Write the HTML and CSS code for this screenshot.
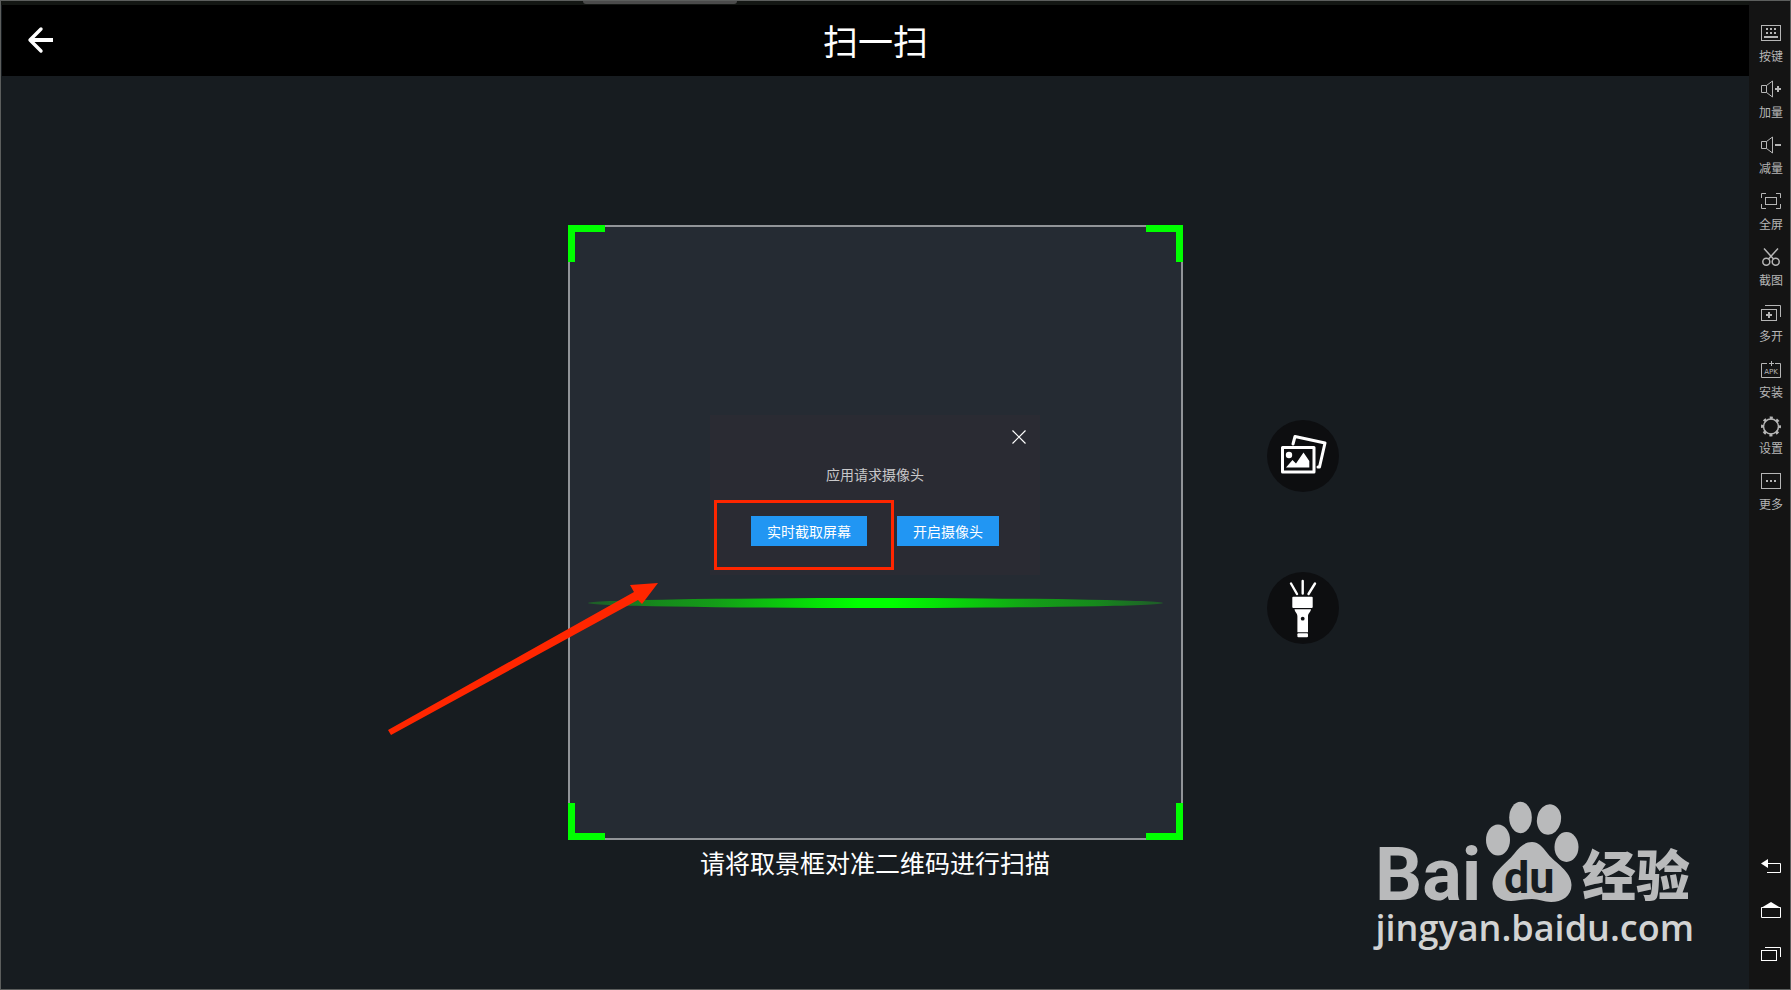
FILE: index.html
```html
<!DOCTYPE html>
<html lang="zh-CN">

<head>
  <meta charset="UTF-8">
  <meta name="viewport" content="width=device-width, initial-scale=1.0">

  <title>扫一扫</title>
  <link rel="stylesheet" href="styles.css">
</head>

<body>

  <div class="window">
    <main class="screen">
      <div class="strip">
        <div class="strip-tab"></div>
      </div>

      <header class="header">
        <button type="button" class="back" aria-label="返回">
          <svg width="28" height="28" viewBox="0 0 28 28" fill="none" stroke="#fff" stroke-width="4">
            <path d="M4 14H27" />
            <path d="M15 3L4 14L15 25" stroke-linecap="round" stroke-linejoin="round" stroke-width="3.4" />
          </svg>
        </button>
        <h1>扫一扫</h1>
      </header>

      <section class="stage">
        <div class="frame">
          <span class="corner top-left"></span>
          <span class="corner top-right"></span>
          <span class="corner bottom-left"></span>
          <span class="corner bottom-right"></span>
          <div class="scan-line"></div>
        </div>

        <div class="actions">
          <button type="button" class="round" aria-label="相册">
            <svg width="72" height="72" viewBox="0 0 72 72" fill="none" stroke="#fff" stroke-width="3"
              stroke-linejoin="round" stroke-linecap="round">
              <path d="M26 24L28 16.500L58 23L52.500 47H51" />
              <rect x="15.500" y="27.500" width="31.500" height="24.500" />
              <circle cx="22" cy="35" r="3.200" fill="#fff" stroke="none" />
              <path d="M19 47.500L25.500 40L29 43.500L36.500 32.500L42.300 41V47.500Z" fill="#fff" stroke="none" />
            </svg>
          </button>
          <button type="button" class="round" aria-label="手电筒">
            <svg width="72" height="72" viewBox="0 0 72 72" fill="#fff">
              <path d="M35.700 9V21.500M24 11.500L30 22M48 11.500L41.500 22" stroke="#fff" stroke-width="2.400"
                stroke-linecap="round" />
              <rect x="25.300" y="24.700" width="20.400" height="11.300" rx="1" />
              <path d="M27.500 37.300H44C43.600 40.500 41 41 41 44.500V60.300H30.400V44.500C30.400 41 27.900 40.500 27.500 37.300Z" />
              <rect x="30.400" y="61.300" width="10.600" height="4" rx="1" />
              <circle cx="35.700" cy="46.700" r="1.900" fill="#0d0e10" />
            </svg>
          </button>
        </div>

        <p class="hint">请将取景框对准二维码进行扫描</p>
      </section>

      <div class="overlay">
        <div class="dialog" role="dialog" aria-labelledby="dialog-text">
          <button type="button" class="close" aria-label="关闭">
            <svg width="14" height="14" viewBox="0 0 14 14" stroke="#fff" stroke-width="1.200">
              <path d="M0.500 0.500L13.500 13.500M13.500 0.500L0.500 13.500" />
            </svg>
          </button>
          <p id="dialog-text">应用请求摄像头</p>
          <div class="dialog-buttons">
            <button type="button" class="but">实时截取屏幕</button>
            <button type="button" class="but">开启摄像头</button>
          </div>
          <div class="mark-box"></div>
          <svg class="mark-arrow" width="272" height="154" viewBox="0 0 272 154" fill="#ff2600">
            <path d="M0 148L246 10L242 3L270 1L254 22L250 18L3 153Z" />
          </svg>
        </div>
      </div>

      <div class="watermark">
        <svg width="320" height="102" viewBox="0 0 320 102" fill="#b9babb">
          <text class="logo-bai" x="1" y="99">Bai</text>
          <ellipse cx="124" cy="39" rx="12" ry="15.500" />
          <ellipse cx="146.500" cy="16.500" rx="11.300" ry="15.700" />
          <ellipse cx="175" cy="18.500" rx="12" ry="15.300" transform="rotate(10 175 18.500)" />
          <ellipse cx="192.500" cy="46" rx="12" ry="15" />
          <path d="M158 41C164 41 168 45 174 53C181 62 197.500 70 197.500 84C197.500 95 188 101 177 101C170 101 165 98 158 98C149 98 144 100 137 100C126 100 118.500 94 118.500 83C118.500 70 132 63 140 53C146 45 151 41 158 41Z" />
          <text class="logo-du" x="130" y="92">du</text>
          <text class="logo-cn" x="208" y="95">经验</text>
        </svg>
        <p>jingyan.baidu.com</p>
      </div>
    </main>

    <aside class="toolbar">
      <nav class="tools">
        <button type="button" class="tool">
          <svg viewBox="0 0 20 20">
            <rect x="0.500" y="2.500" width="19" height="15" />
            <path d="M5 6H15M5 10H15" stroke-width="2" stroke-dasharray="2 2" />
            <path d="M3 14H17" stroke-width="2" />
          </svg>
          <span>按键</span>
        </button>
        <button type="button" class="tool">
          <svg viewBox="0 0 20 20">
            <path d="M5.500 6.500H0.500V13.500H5.500ZM5.500 6.500L11.500 2V18L5.500 13.500" />
            <path d="M14 10H20M17 7V13" stroke-width="2" />
          </svg>
          <span>加量</span>
        </button>
        <button type="button" class="tool">
          <svg viewBox="0 0 20 20">
            <path d="M5.500 6.500H0.500V13.500H5.500ZM5.500 6.500L11.500 2V18L5.500 13.500" />
            <path d="M14 10H20" stroke-width="2" />
          </svg>
          <span>减量</span>
        </button>
        <button type="button" class="tool">
          <svg viewBox="0 0 20 20">
            <path d="M0.500 7V2.500H5M15 2.500H19.500V7M19.500 13V17.500H15M5 17.500H0.500V13" />
            <rect x="4.500" y="6.500" width="11" height="7" />
          </svg>
          <span>全屏</span>
        </button>
        <button type="button" class="tool">
          <svg viewBox="0 0 20 20" stroke-width="1.500">
            <path d="M3 1.500L12.500 12M17 1.500L7.500 12" />
            <circle cx="5.300" cy="14.700" r="3.500" />
            <circle cx="14.700" cy="14.700" r="3.500" />
          </svg>
          <span>截图</span>
        </button>
        <button type="button" class="tool">
          <svg viewBox="0 0 20 20">
            <rect x="0.500" y="6.500" width="15" height="11" />
            <path d="M4 2.500H19.500V14" />
            <path d="M5 12H11M8 9V15" stroke-width="2" />
          </svg>
          <span>多开</span>
        </button>
        <button type="button" class="tool">
          <svg viewBox="0 0 20 20">
            <path d="M6 4.500H0.500V18.500H19.500V4.500H14" />
            <path d="M10.500 2V7M8 4.500H13" />
            <text class="apk" x="10" y="15">APK</text>
          </svg>
          <span>安装</span>
        </button>
        <button type="button" class="tool">
          <svg class="gear" viewBox="0 0 20 20">
            <circle cx="10" cy="11.500" r="7.500" stroke-width="1.500" />
            <circle cx="10" cy="11.500" r="8.500" stroke-width="3" stroke-dasharray="3 3.676" stroke-dashoffset="1.500" />
          </svg>
          <span>设置</span>
        </button>
        <button type="button" class="tool">
          <svg viewBox="0 0 20 20">
            <rect x="0.500" y="2.500" width="19" height="15" />
            <path d="M5 10H15" stroke-width="2" stroke-dasharray="2 2" />
          </svg>
          <span>更多</span>
        </button>
      </nav>

      <nav class="keys">
        <button type="button" class="key" aria-label="返回键">
          <svg viewBox="0 0 20 20">
            <path d="M7 7.500H19.500V16.500H6" />
            <path d="M0 7.500L7 3V12Z" fill="#fff" stroke="none" />
          </svg>
        </button>
        <button type="button" class="key" aria-label="主页">
          <svg viewBox="0 0 20 20">
            <path d="M0.500 7.500H19.500V17.500H0.500Z" />
            <path d="M10 2L20 8H0Z" fill="#fff" stroke="none" />
          </svg>
        </button>
        <button type="button" class="key" aria-label="最近任务">
          <svg viewBox="0 0 20 20">
            <rect x="0.500" y="6.500" width="15" height="10" />
            <path d="M4 3.500H19.500V13" />
          </svg>
        </button>
      </nav>
    </aside>
  </div>

</body>

</html>
```

FILE: styles.css
```css
* {
  margin: 0;
  padding: 0;
  box-sizing: border-box;
}

body {
  font-family: "Noto Sans CJK SC", sans-serif;
  color: #fff;
  background-color: #161b1f;
}

button {
  border: none;
  background: none;
  color: inherit;
  font-family: inherit;
  cursor: pointer;
}

svg {
  display: block;
}

.window {
  display: flex;
  min-height: 100vh;
  border: 1px solid #5c5e5d;
}

.screen {
  position: relative;
  flex: 1;
  display: flex;
  flex-direction: column;
}

/* top bar */
.strip {
  height: 4px;
  background-color: #131613;
}

.strip-tab {
  width: 154px;
  height: 3px;
  margin-left: 33.3%;
  background-color: #4b4b4b;
  border-radius: 0 0 3px 3px;
}

.header {
  display: grid;
  grid-template-columns: 1fr auto 1fr;
  align-items: center;
  height: 71px;
  padding: 0 24px 2px;
  margin-left: 1px;
  background-color: #000;
}

.back {
  justify-self: start;
}

.header h1 {
  font-size: 35px;
  line-height: 48px;
  font-weight: 400;
}

/* scanner */
.stage {
  flex: 1;
  display: grid;
  grid-template-columns: 1fr auto 1fr;
  grid-template-rows: 1fr auto 1fr;
  background-color: #171c20;
}

.frame {
  grid-area: 2 / 2;
  position: relative;
  width: 615px;
  aspect-ratio: 1;
  border: 2px solid #919498;
  background-color: #252b33;
}

.corner {
  position: absolute;
  width: 37px;
  height: 37px;
  border: 0 solid #00ff00;
}

.top-left {
  top: -2px;
  left: -2px;
  border-width: 7px 0 0 7px;
}

.top-right {
  top: -2px;
  right: -2px;
  border-width: 7px 7px 0 0;
}

.bottom-left {
  bottom: -2px;
  left: -2px;
  border-width: 0 0 7px 7px;
}

.bottom-right {
  right: -2px;
  bottom: -2px;
  border-width: 0 7px 7px 0;
}

.scan-line {
  position: absolute;
  top: 371px;
  left: 18px;
  right: 18px;
  height: 10px;
  border-radius: 50%;
  background-image: linear-gradient(to right, #1f5a29, #168a1c 12%, #149c18 22%, #00ff00 47%, #00ff00 53%, #149c18 78%, #168a1c 88%, #1f5a29);
}

.actions {
  grid-area: 2 / 3;
  display: flex;
  flex-direction: column;
  justify-content: center;
  gap: 80px;
  padding: 0 0 2px 84px;
}

.round {
  width: 72px;
  height: 72px;
  border-radius: 50%;
  background-color: #0d0e10;
}

.hint {
  grid-area: 3 / 1 / 4 / 4;
  padding-top: 2px;
  text-align: center;
  font-size: 25px;
  line-height: 40px;
}

/* camera request */
.overlay {
  position: absolute;
  inset: 0;
  display: grid;
  place-items: center;
  pointer-events: none;
}

.dialog {
  position: relative;
  width: 330px;
  height: 160px;
  padding: 15px 14px 0;
  background-color: #2a2b33;
  text-align: center;
  pointer-events: auto;
}

.close {
  display: block;
  margin-left: auto;
}

.dialog p {
  margin-top: 19px;
  font-size: 14px;
  line-height: 22px;
  color: #c8c8ca;
}

.dialog-buttons {
  display: flex;
  justify-content: center;
  gap: 30px;
  margin-top: 31px;
}

.but {
  height: 30px;
  padding: 0 16px;
  font-size: 14px;
  line-height: 30px;
  background-color: #2196f3;
}

.mark-box {
  position: absolute;
  top: 85px;
  left: 4px;
  width: 180px;
  height: 70px;
  border: 3px solid #ff2600;
  pointer-events: none;
}

.mark-arrow {
  position: absolute;
  top: 167px;
  right: 380px;
  pointer-events: none;
}

/* watermark */
.watermark {
  position: absolute;
  right: 55px;
  bottom: 36px;
}

.watermark svg {
  overflow: visible;
}

.logo-bai {
  font: bold 74px Roboto, sans-serif;
}

.logo-du {
  font: bold 45px Roboto, sans-serif;
  fill: #171c20;
}

.logo-cn {
  font: 900 54px "Noto Sans CJK SC", sans-serif;
}

.watermark p {
  font-family: "Open Sans", sans-serif;
  font-size: 36px;
  font-weight: 600;
  line-height: 50px;
  text-align: right;
  color: #d2d3d3;
}

/* emulator toolbar */
.toolbar {
  display: flex;
  flex-direction: column;
  justify-content: space-between;
  width: 41px;
  padding: 22px 0 25px 3px;
  background-color: #141414;
}

.tools,
.keys {
  display: flex;
  flex-direction: column;
}

.tools {
  gap: 15px;
}

.keys {
  gap: 24px;
}

.toolbar svg {
  width: 20px;
  height: 20px;
  margin: 0 auto;
  fill: none;
  stroke: currentColor;
}

.toolbar .gear {
  overflow: visible;
}

.tool {
  color: #b6b6b6;
}

.tool span {
  display: block;
  margin-top: 5px;
  font-size: 12px;
  line-height: 16px;
}

.apk {
  font: 7px "DejaVu Sans", sans-serif;
  text-anchor: middle;
  fill: currentColor;
  stroke: none;
}
```
